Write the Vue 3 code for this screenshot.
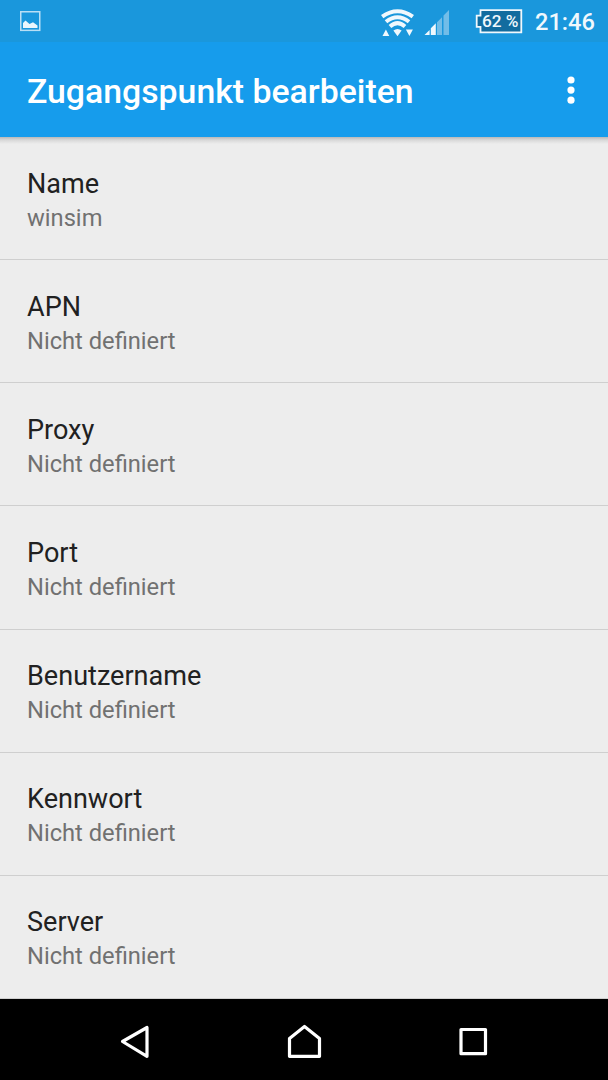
<script setup>
import { ref } from 'vue'

const time = ref('21:46')
const battery = ref(62)

const settings = ref([
    { label: 'Name', value: 'winsim' },
    { label: 'APN', value: '' },
    { label: 'Proxy', value: '' },
    { label: 'Port', value: '' },
    { label: 'Benutzername', value: '' },
    { label: 'Kennwort', value: '' },
    { label: 'Server', value: '' },
])
</script>

<template>
    <div class="screen">
        <div class="status-bar">
            <svg class="picture" width="21" height="21" viewBox="0 0 21 21">
                <rect x="0.75" y="0.75" width="19" height="18.6" fill="none" stroke="#b9dff5" stroke-width="1.5" />
                <path d="M3 17V12L5.500 9.500L9.500 13L13 11.300L17.500 14.500V17Z" fill="#eaf6fd" />
            </svg>
            <svg class="wifi" width="34" height="28" viewBox="0 0 34 28">
                <g fill="none" stroke="#f0f8fd" stroke-width="4">
                    <path d="M1.200 7.600Q16.500 -3.200 31.800 7.600" />
                    <path d="M5 12.800Q16.500 3.600 28 12.800" />
                    <path d="M9 17.400Q16.500 10.800 24 17.400" />
                </g>
                <path d="M12.400 21.600Q16.500 18.600 20.600 21.600L16.500 27.200Z" fill="#f0f8fd" />
                <path d="M1.500 27L4.900 20.400L8.300 27Z M24.900 20.400H31.900L28.400 27Z" fill="#f0f8fd" />
            </svg>
            <svg class="signal" width="27" height="27" viewBox="0 0 27 27">
                <path d="M0.500 26L5.600 20.900V26Z M6.800 19.300L11.800 14.300V26H6.800Z" fill="#f0f8fd" />
                <path d="M13 13.200L18 8.200V26H13Z M19.500 6.500L25 1V26H19.500Z" fill="#72bde8" />
            </svg>
            <div class="battery">
                <svg width="48" height="25" viewBox="0 0 48 25">
                    <path d="M5.500 1.200H46.300V23.300H5.500V17.800H1.700V6.700H5.500Z" fill="#126c9f" stroke="#f0f8fd" stroke-width="1.800" />
                </svg>
                <span>{{ battery }} %</span>
            </div>
            <span class="time">{{ time }}</span>
        </div>

        <header class="toolbar">
            <h1>Zugangspunkt bearbeiten</h1>
            <svg width="8" height="28" viewBox="0 0 8 28" fill="#fff">
                <circle cx="4" cy="4" r="3.600" />
                <circle cx="4" cy="14.100" r="3.600" />
                <circle cx="4" cy="24.200" r="3.600" />
            </svg>
        </header>

        <main class="list">
            <div v-for="item in settings" :key="item.label" class="row">
                <div class="label">{{ item.label }}</div>
                <div class="value">{{ item.value || 'Nicht definiert' }}</div>
            </div>
        </main>

        <nav class="nav-bar">
            <svg width="34" height="36" viewBox="0 0 34 36">
                <path d="M4.500 17.500L29 3.500V32.300Z" />
            </svg>
            <svg width="36" height="36" viewBox="0 0 36 36">
                <path d="M2.500 14.500L17.500 2.500L32.500 14.500V32.300H2.500Z" />
            </svg>
            <svg width="32" height="36" viewBox="0 0 32 36">
                <path d="M4 5.500H28.500V29.700H4Z" />
            </svg>
        </nav>
    </div>
</template>

<style>
body {
    margin: 0;
}
</style>

<style scoped>
.screen {
    display: flex;
    flex-direction: column;
    width: 608px;
    height: 1080px;
    overflow: hidden;
    background: #ededed;
    font-family: Roboto, "Liberation Sans", sans-serif;
}

.status-bar {
    display: flex;
    align-items: flex-start;
    box-sizing: border-box;
    height: 42px;
    padding: 0 13px 0 20px;
    background: #1a97dc;
    color: #f0f8fd;
}

.picture {
    margin-top: 11px;
}

.wifi {
    margin: 9px 0 0 auto;
}

.signal {
    margin: 9px 0 0 9px;
}

.battery {
    position: relative;
    width: 48px;
    height: 25px;
    margin: 9px 0 0 24px;
}

.battery svg {
    display: block;
}

.battery span {
    position: absolute;
    top: 0;
    left: 7px;
    font-size: 17.2px;
    font-weight: 500;
    line-height: 25px;
    white-space: nowrap;
}

.time {
    width: 60px;
    margin-left: 12px;
    font-size: 23.6px;
    font-weight: 500;
    line-height: 45px;
    white-space: nowrap;
}

.toolbar {
    display: flex;
    align-items: center;
    justify-content: space-between;
    box-sizing: border-box;
    height: 95px;
    padding: 0 33px 0 27px;
    background: #169cec;
    color: #fff;
}

.toolbar h1 {
    margin: 5px 0 0;
    font-size: 33.8px;
    font-weight: 500;
    line-height: 40px;
}

.list {
    display: grid;
    grid-template-rows: repeat(7, 1fr);
    height: 862px;
    background: linear-gradient(#b9b9b9, #d8d8d8 3px, #ededed 7px);
}

.row {
    box-sizing: border-box;
    padding: 29.5px 27px 0;
    border-bottom: 1px solid #cfcfcf;
}

.label {
    color: #212121;
    font-size: 27.05px;
    line-height: 34px;
}

.value {
    color: #717171;
    font-size: 23.7px;
    line-height: 34px;
}

.nav-bar {
    display: flex;
    align-items: flex-start;
    justify-content: space-between;
    box-sizing: border-box;
    height: 81px;
    padding: 25px 119px 0 118px;
    background: #000;
}

.nav-bar path {
    fill: none;
    stroke: #fff;
    stroke-width: 3.2;
    stroke-linejoin: round;
}
</style>
